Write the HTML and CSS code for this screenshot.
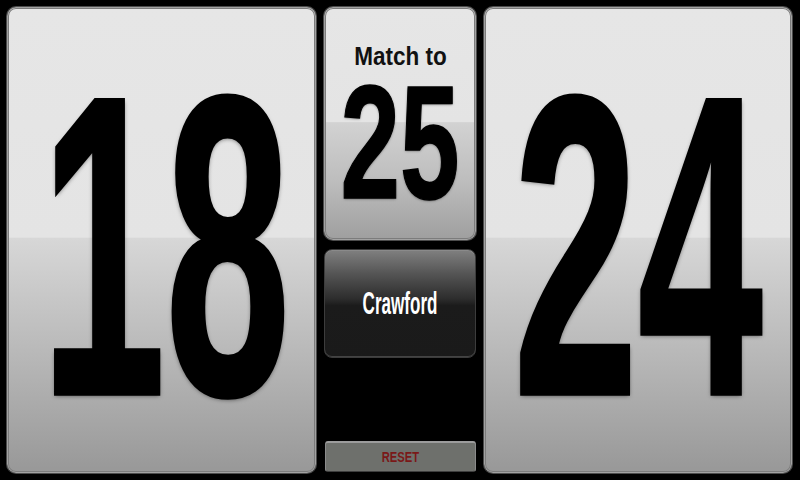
FILE: index.html
```html
<!DOCTYPE html>
<html>
<head>
<meta charset="utf-8">
<link rel="stylesheet" href="styles.css">
</head>
<body>
<div class="board">
  <div class="panel score score-left"><span class="big">18</span></div>
  <div class="middle">
    <div class="panel target">
      <span class="label">Match to</span>
      <span class="target-num">25</span>
    </div>
    <div class="crawford"><span class="crawford-text">Crawford</span></div>
    <div class="spacer"></div>
    <div class="reset"><span class="reset-text">RESET</span></div>
  </div>
  <div class="panel score score-right"><span class="big">24</span></div>
</div>
</body>
</html>
```
FILE: styles.css
```css
html, body {
  margin: 0;
  padding: 0;
  background: #000;
  width: 800px;
  height: 480px;
  overflow: hidden;
  font-family: "Liberation Sans", Arial, sans-serif;
  font-weight: bold;
}
.board {
  display: flex;
  gap: 8px;
  padding: 7px 8px 7px 7px;
  height: 480px;
  box-sizing: border-box;
}
.panel {
  box-sizing: border-box;
  border: 1px solid #a2a2a2;
  border-radius: 9px;
  box-shadow: 0 0 0 1px #4c4c4c, inset 0 0 0 1px #7c7c7c;
}
.score {
  height: 466px;
  display: flex;
  justify-content: center;
  align-items: flex-start;
  padding-top: 125px;
  background: linear-gradient(to bottom,
    #e6e6e6 0%, #e4e4e4 49.4%,
    #d7d7d7 49.6%, #c4c4c4 65%, #ababab 85%, #989898 100%);
}
.score-left { width: 309px; }
.score-right { flex: 1; }
.big {
  display: inline-block;
  font-size: 224px;
  line-height: 224px;
  color: #000;
  transform: scaleY(1.907);
  -webkit-text-stroke: 2px #000;
  text-shadow: 0 1px 3px rgba(0,0,0,0.55);
  white-space: nowrap;
}
.score-left .big { margin-left: 8px; }
.middle {
  width: 152px;
  display: flex;
  flex-direction: column;
}
.target {
  height: 233px;
  display: flex;
  flex-direction: column;
  align-items: center;
  padding-top: 36px;
  background: linear-gradient(to bottom,
    #e6e6e6 0%, #e4e4e4 49.4%,
    #d2d2d2 49.6%, #bdbdbd 75%, #9f9f9f 100%);
}
.label {
  display: inline-block;
  font-size: 25px;
  line-height: 25px;
  color: #111;
  transform: scaleX(0.9);
  white-space: nowrap;
}
.target-num {
  display: inline-block;
  font-size: 107px;
  line-height: 107px;
  margin-top: 20px;
  color: #000;
  transform: scaleY(1.513);
  -webkit-text-stroke: 1px #000;
  text-shadow: 0 1px 2px rgba(0,0,0,0.55);
  white-space: nowrap;
}
.crawford {
  margin-top: 9px;
  height: 109px;
  box-sizing: border-box;
  border-radius: 8px;
  border: 1px solid #3c3c3c;
  box-shadow: inset 0 1px 0 #8a8a8a, inset 0 -1px 0 #444;
  background: linear-gradient(to bottom, #808080 0%, #555 22%, #2c2c2c 46%, #1b1b1b 52%, #1a1a1a 100%);
  display: flex;
  justify-content: center;
  align-items: center;
}
.crawford-text {
  display: inline-block;
  font-size: 31px;
  line-height: 31px;
  color: #fff;
  transform: scaleX(0.55);
  white-space: nowrap;
}
.spacer { flex: 1; }
.reset {
  height: 31px;
  margin-bottom: 1px;
  margin-left: 1px;
  box-sizing: border-box;
  border-radius: 3px;
  background: #6e706c;
  border-top: 2px solid #9c9c9c;
  border-left: 1px solid #8a8a8a;
  border-right: 1px solid #8a8a8a;
  border-bottom: 1px solid #3e3e3e;
  display: flex;
  justify-content: center;
  align-items: center;
}
.reset-text {
  display: inline-block;
  font-size: 14px;
  line-height: 14px;
  color: #7a1818;
  transform: scaleX(0.8);
}
```
